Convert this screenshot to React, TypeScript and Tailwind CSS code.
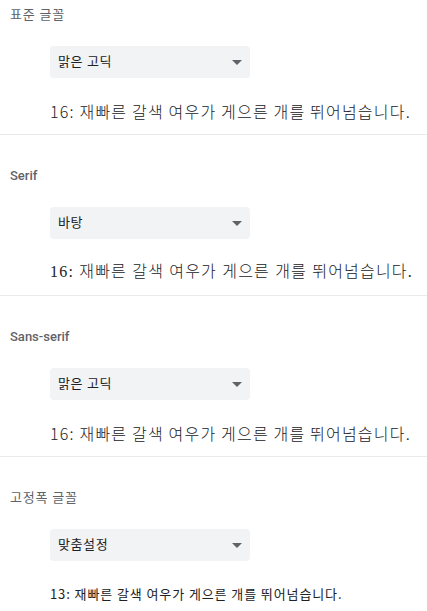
const sample = '재빠른 갈색 여우가 게으른 개를 뛰어넘습니다.';

type Section = {
  label: string;
  labelClass: string;
  value: string;
  sampleSize: string;
  sampleClass: string;
  first?: boolean;
  last?: boolean;
};

const sections: Section[] = [
  {
    label: '표준 글꼴',
    labelClass: 'font-normal tracking-[0.8px]',
    value: '맑은 고딕',
    sampleSize: '16',
    sampleClass: "text-[16px] tracking-[1.2px] font-light font-['Noto_Sans_CJK_KR',sans-serif]",
    first: true,
  },
  {
    label: 'Serif',
    labelClass: 'font-medium',
    value: '바탕',
    sampleSize: '16',
    sampleClass: "text-[16px] tracking-[1.2px] font-['Liberation_Serif','Noto_Sans_CJK_KR',serif] font-light",
  },
  {
    label: 'Sans-serif',
    labelClass: 'font-medium',
    value: '맑은 고딕',
    sampleSize: '16',
    sampleClass: "text-[16px] tracking-[1.2px] font-light font-['Noto_Sans_CJK_KR',sans-serif]",
  },
  {
    label: '고정폭 글꼴',
    labelClass: 'font-normal tracking-[0.8px]',
    value: '맞춤설정',
    sampleSize: '13',
    sampleClass: "text-[13px] tracking-[0.9px] font-normal font-['Noto_Sans_CJK_KR',sans-serif]",
    last: true,
  },
];

const Arrow = () => (
  <svg width="10" height="5" viewBox="0 0 10 5" className="shrink-0">
    <path d="M0 0h10L5 5z" fill="#5f6368" />
  </svg>
);

const FontSection = ({ s }: { s: Section }) => {
  return (
    <section
      className={`${s.first ? 'pt-[5px]' : 'pt-[31px]'} ${
        s.last ? '' : 'border-b border-[#e8eaed]'
      } pb-[11px]`}
    >
      <p
        className={`pl-[10px] text-[13px] leading-5 text-[#5f6368] ${s.labelClass}`}
      >
        {s.label}
      </p>
      <div className="mt-[21px] ml-[50px] w-[200px] h-8 rounded bg-[#f1f3f4] flex items-center justify-between pl-2 pr-2">
        <span className="text-[13px] font-normal tracking-[0.6px] text-[#202124]">{s.value}</span>
        <Arrow />
      </div>
      <p className={`mt-[21px] ml-[50px] leading-6 text-[#202124] ${s.sampleClass}`}>
        {s.sampleSize}: {sample}
      </p>
    </section>
  );
};

export default function App() {
  return (
    <div className="w-[427px] h-[611px] overflow-hidden bg-white font-['Roboto','Noto_Sans_CJK_KR',sans-serif]">
      {sections.map((s) => (
        <FontSection key={s.label} s={s} />
      ))}
    </div>
  );
}
